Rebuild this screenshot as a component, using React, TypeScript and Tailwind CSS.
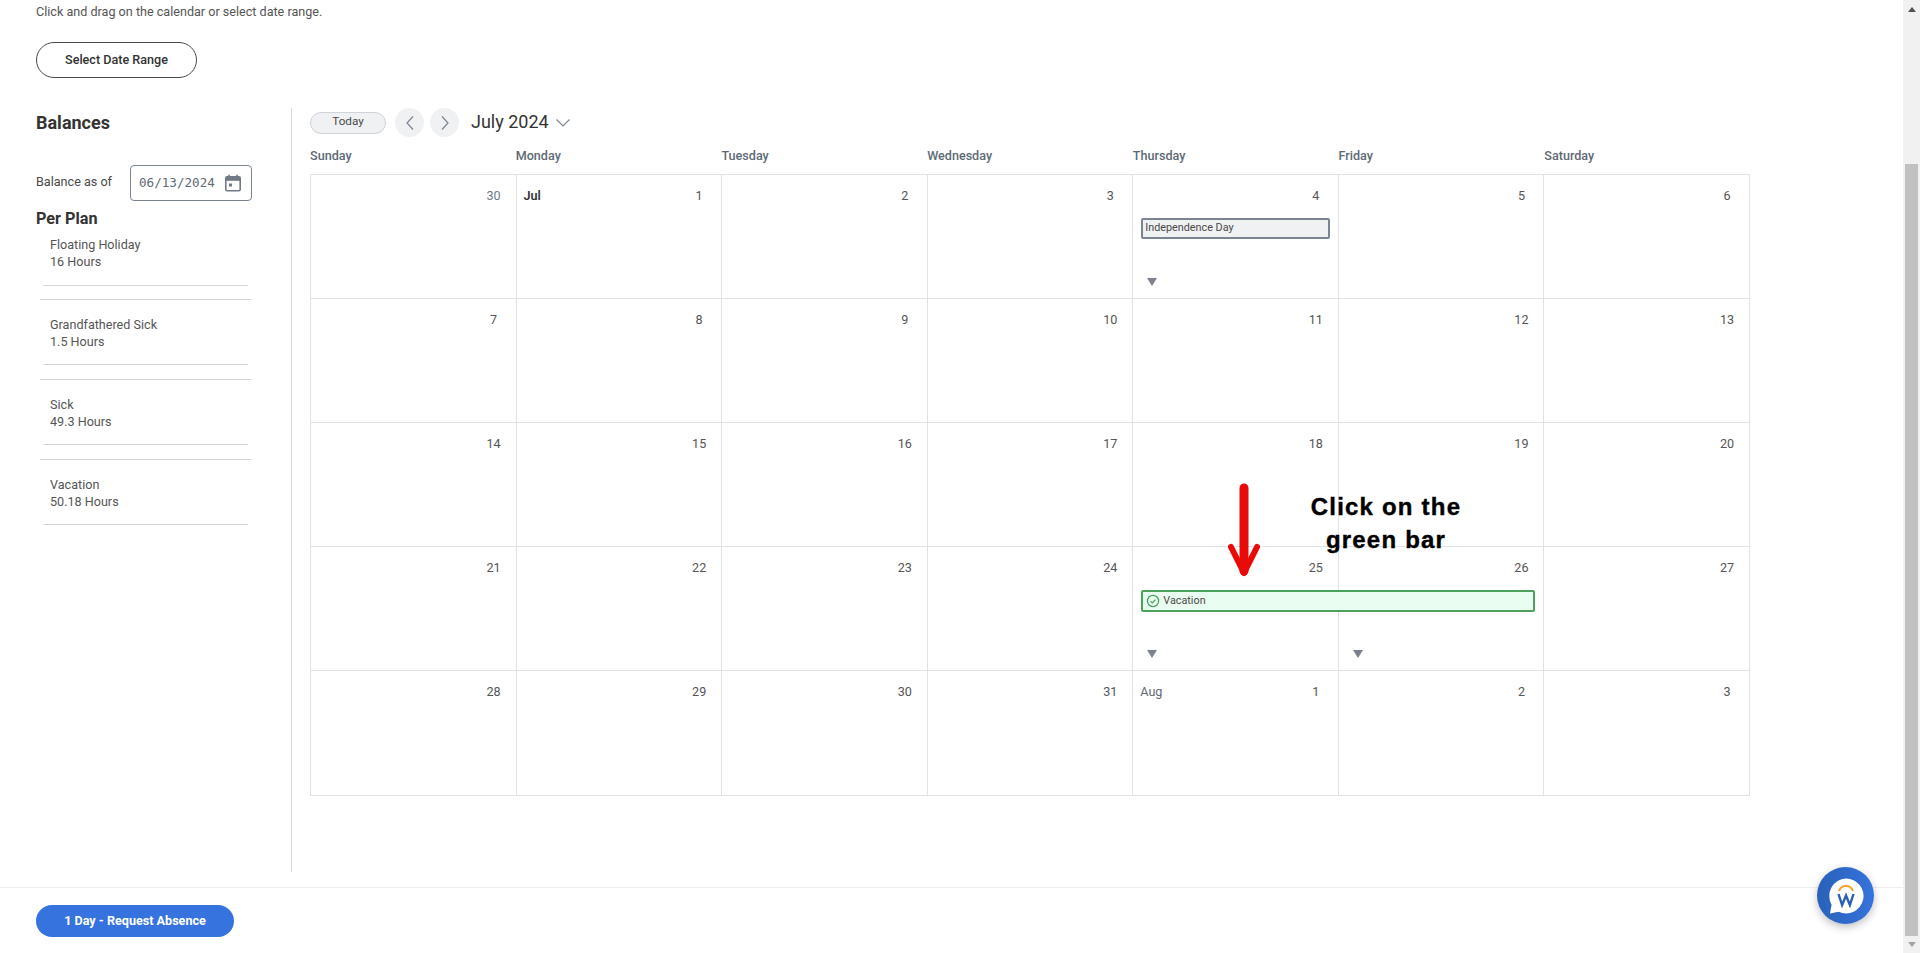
import React from "react";

type Cell = { n: number; month?: string; bold?: boolean; muted?: boolean; marker?: boolean; event?: React.ReactNode };

const weekdays = ["Sunday", "Monday", "Tuesday", "Wednesday", "Thursday", "Friday", "Saturday"];

function Marker() {
  return (
    <svg width="10" height="8" viewBox="0 0 10 8" className="absolute left-[14px] bottom-[12px]">
      <path d="M0 0H10L5 8Z" fill="#7b828e" />
    </svg>
  );
}

const holiday = (
  <div className="absolute left-[8px] top-[43px] z-10 flex h-[21px] w-[189px] items-center rounded-[2px] border-2 border-[#7b8591] bg-[#f0f1f2] pb-[2px] pl-[2px] text-[10.8px] leading-[14px] text-[#494949]">
    Independence Day
  </div>
);

const vacation = (
  <div className="absolute left-[8px] top-[43px] z-10 flex h-[22px] w-[394px] items-center rounded-[2px] border-2 border-[#4ca25c] bg-[#e9fdf0] pl-[3px] text-[10.8px] leading-[14px] text-[#494949]">
    <svg width="14" height="14" viewBox="0 0 14 14" fill="none" stroke="#43a356" strokeWidth="1.2" className="mr-[3px]">
      <circle cx="7" cy="7" r="5.6" />
      <path d="M4.6 7.2l1.7 1.7 3.2-3.3" />
    </svg>
    <span className="pb-[1px]">Vacation</span>
  </div>
);

const rows: Cell[][] = [
  [
    { n: 30, muted: true },
    { n: 1, month: "Jul", bold: true },
    { n: 2 },
    { n: 3 },
    { n: 4, marker: true, event: holiday },
    { n: 5 },
    { n: 6 },
  ],
  [{ n: 7 }, { n: 8 }, { n: 9 }, { n: 10 }, { n: 11 }, { n: 12 }, { n: 13 }],
  [{ n: 14 }, { n: 15 }, { n: 16 }, { n: 17 }, { n: 18 }, { n: 19 }, { n: 20 }],
  [
    { n: 21 },
    { n: 22 },
    { n: 23 },
    { n: 24 },
    { n: 25, marker: true, event: vacation },
    { n: 26, marker: true },
    { n: 27 },
  ],
  [
    { n: 28 },
    { n: 29 },
    { n: 30 },
    { n: 31 },
    { n: 1, month: "Aug" },
    { n: 2 },
    { n: 3 },
  ],
];

const plans = [
  ["Floating Holiday", "16 Hours"],
  ["Grandfathered Sick", "1.5 Hours"],
  ["Sick", "49.3 Hours"],
  ["Vacation", "50.18 Hours"],
];

function PlanItem({ name, hours, index }: { name: string; hours: string; index: number }) {
  const outer = index === 0 ? "" : index === 1 ? "mt-[13px] border-t border-[#d3d6dc]" : "mt-[14px] border-t border-[#d3d6dc]";
  return (
    <div className={outer}>
      <div className={`mx-[3px] ${index === 0 ? "pb-[15px] pt-[4px]" : "pb-[14px] pt-[16px]"} border-b border-[#d3d6dc]`}>
        <div className="pl-[7px] text-[12.6px] leading-[17px] text-[#555555]">{name}</div>
        <div className="pl-[7px] text-[12.6px] leading-[17px] text-[#555555]">{hours}</div>
      </div>
    </div>
  );
}

function ChatBadge() {
  return (
    <div className="absolute left-[1817px] top-[867px] z-20 flex h-[57px] w-[57px] items-center justify-center rounded-full bg-gradient-to-r from-[#2a61b8] to-[#3573dc] shadow-[0_3px_8px_rgba(0,0,0,0.25)]">
      <svg width="38" height="38" viewBox="0 0 38 38">
        <path d="M19 1.5a17.5 17.5 0 1 1-7.5 33.3L3 36.5l1.6-8.8A17.5 17.5 0 0 1 19 1.5Z" fill="#ffffff" />
        <path d="M12 14a7.4 7.4 0 0 1 14 0" fill="none" stroke="#f5a12c" strokeWidth="2" />
        <path d="M11.5 17l3.6 11 3.9-9.5 3.9 9.5 3.6-11" fill="none" stroke="#2a5fb5" strokeWidth="2.4" strokeLinejoin="miter" />
      </svg>
    </div>
  );
}

export default function App() {
  return (
    <div className="relative flex h-[953px] w-full overflow-hidden bg-white font-['Roboto',sans-serif] text-[#333333]">
      <div className="flex min-w-0 flex-1 flex-col">
        <div className="pl-9 pt-[2px]">
          <p className="text-[12.6px] leading-[20px] text-[#555555]">Click and drag on the calendar or select date range.</p>
          <button className="mt-[20px] h-[36px] w-[161px] rounded-full border border-[#494949] text-[12.6px] font-medium text-[#333333]">
            Select Date Range
          </button>
        </div>

        <div className="mt-[30px] flex h-[764px]">
          <aside className="w-[292px] shrink-0 border-r border-[#d4d6da] pl-9">
            <h2 className="mt-[3px] text-[18px] font-bold leading-[24px] text-[#333333]">Balances</h2>
            <div className="mt-[30px] flex items-center">
              <span className="w-[94px] pb-[3px] text-[12.6px] leading-[16px] text-[#494949]">Balance as of</span>
              <div className="flex h-[36px] w-[122px] items-center justify-between rounded-[4px] border border-[#7b8591] pl-[8px] pr-[9px]">
                <span className="font-['DejaVu_Sans_Mono',monospace] text-[12.6px] text-[#5e6a75]">06/13/2024</span>
                <svg width="18" height="18" viewBox="0 0 18 18" fill="none">
                  <path d="M5 .8v3M13 .8v3" stroke="#6f7a86" strokeWidth="1.6" />
                  <rect x="1.8" y="2.8" width="14.4" height="14" rx="1.2" stroke="#6f7a86" strokeWidth="1.6" />
                  <rect x="2" y="3" width="14" height="3.8" fill="#6f7a86" />
                  <rect x="5" y="9.5" width="3" height="3" fill="#6f7a86" />
                </svg>
              </div>
            </div>
            <h3 className="mt-[9px] text-[16.2px] font-bold leading-[18px] text-[#333333]">Per Plan</h3>
            <div className="ml-[4px] mt-[4px] w-[211px]">
              {plans.map((p, i) => (
                <PlanItem key={p[0]} name={p[0]} hours={p[1]} index={i} />
              ))}
            </div>
          </aside>

          <section className="pl-[18px]">
            <div className="flex items-center">
              <button className="h-[22px] w-[76px] rounded-full border border-[#cfd3da] bg-[#eff1f3] pb-[1px] text-[11.7px] text-[#494949]">
                Today
              </button>
              <button className="ml-[9px] flex h-[29px] w-[29px] items-center justify-center rounded-full bg-[#eff1f3]">
                <svg width="12" height="16" viewBox="0 0 12 16" fill="none" stroke="#7b8591" strokeWidth="1.2">
                  <path d="M9 1.5L3 8l6 6.5" />
                </svg>
              </button>
              <button className="ml-[6px] flex h-[29px] w-[29px] items-center justify-center rounded-full bg-[#eff1f3]">
                <svg width="12" height="16" viewBox="0 0 12 16" fill="none" stroke="#7b8591" strokeWidth="1.2">
                  <path d="M3 1.5L9 8l-6 6.5" />
                </svg>
              </button>
              <span className="ml-[12px] pb-[1px] text-[18px] leading-[26px] text-[#333333]">July 2024</span>
              <svg width="16" height="10" viewBox="0 0 16 10" fill="none" stroke="#7b8591" strokeWidth="1.2" className="ml-[6px]">
                <path d="M1.5 1.5L8 8l6.5-6.5" />
              </svg>
            </div>

            <div className="mt-[9px] grid w-[1440px] grid-cols-7">
              {weekdays.map((d) => (
                <div key={d} className="h-[28px] pt-[1px] text-[12.6px] font-medium leading-[18px] text-[#5e6a75]">{d}</div>
              ))}
            </div>

            <div className="grid w-[1440px] grid-cols-7 border-l border-t border-[#dfe2e7]">
              {rows.flat().map((c, i) => (
                <div key={i} className={`relative ${i >= 28 ? "h-[125px]" : "h-[124px]"} border-b border-r border-[#dfe2e7]`}>
                  <div className="flex items-center justify-between pl-[7px] pr-[12px] pt-[12px] text-[12.6px] leading-[18px]">
                    <span className={c.bold ? "font-semibold text-[#333333]" : "text-[#5e6a75]"}>{c.month ?? ""}</span>
                    <span className={`w-[20px] text-center ${c.muted ? "text-[#6c7a89]" : "text-[#555555]"}`}>{c.n}</span>
                  </div>
                  {c.event}
                  {c.marker && <Marker />}
                </div>
              ))}
            </div>
          </section>
        </div>

        <div className="mt-[15px] flex-1 border-t border-[#eeeeee] pl-9 pt-[17px]">
          <button className="h-[32px] w-[198px] rounded-full bg-[#3773de] text-[12.6px] font-bold text-white">
            1 Day - Request Absence
          </button>
        </div>
      </div>

      <div className="flex w-[17px] shrink-0 flex-col items-center bg-[#f1f1f1]">
        <svg width="8" height="5" viewBox="0 0 8 5" className="mt-[7px]"><path d="M4 0L8 5H0Z" fill="#505050" /></svg>
        <div className="mt-[152px] h-[772px] w-[13px] bg-[#c1c1c1]" />
        <svg width="8" height="5" viewBox="0 0 8 5" className="mt-[6px]"><path d="M0 0H8L4 5Z" fill="#a3a3a3" /></svg>
      </div>

      <svg width="36" height="96" viewBox="0 0 36 96" className="absolute left-[1226px] top-[483px] z-20" fill="none" stroke="#ea0a0a" strokeLinecap="round" strokeLinejoin="round">
        <path d="M18 5V88" strokeWidth="9" />
        <path d="M5 64L18 90L31 64" strokeWidth="6" />
      </svg>
      <div className="absolute left-[1266px] top-[490px] z-20 w-[240px] text-center font-['Liberation_Sans',sans-serif] text-[24px] font-bold leading-[33px] tracking-[1.2px] text-black [-webkit-text-stroke:0.4px_black]">
        Click on the<br />green bar
      </div>

      <ChatBadge />
    </div>
  );
}
